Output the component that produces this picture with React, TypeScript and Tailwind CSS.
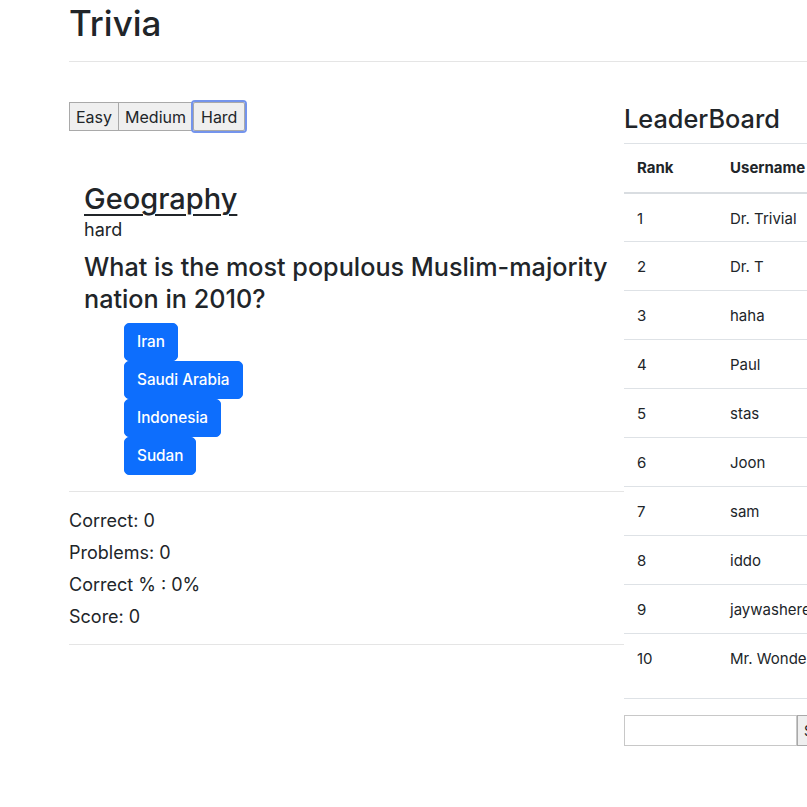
import React from 'react';

const leaders = [
  'Dr. Trivial',
  'Dr. T',
  'haha',
  'Paul',
  'stas',
  'Joon',
  'sam',
  'iddo',
  'jaywashere',
  'Mr. Wonderful',
];

const answers = ['Iran', 'Saudi Arabia', 'Indonesia', 'Sudan'];

function App() {
  return (
    <div
      className="w-[807px] min-h-[807px] overflow-hidden bg-white text-[#212529]"
      style={{ fontFamily: 'Inter, "Liberation Sans", sans-serif' }}
    >
      {/* Header */}
      <div className="ml-[69px] w-[900px] border-b border-[#e5e5e5] h-[62px]">
        <h1 className="text-[35px] leading-[46px] font-medium">Trivia</h1>
      </div>

      <div className="flex pl-[69px]">
        {/* Game column */}
        <div className="w-[555px] shrink-0">
          <div className="mt-[40px] flex">
            <button className="h-[29px] px-[6px] text-[16px] border border-[#a9a9a9] bg-[#efefef]">Easy</button>
            <button className="h-[29px] px-[6px] text-[16px] border border-l-0 border-[#a9a9a9] bg-[#efefef]">Medium</button>
            <button className="h-[29px] px-[7px] text-[16px] border border-[#a9a9a9] bg-[#efefef] outline outline-2 outline-[#7494ec] rounded-[2px]">Hard</button>
          </div>

          <div className="pl-[15px] mt-[51px]">
            <h2 className="text-[29px] leading-[34px] font-medium underline underline-offset-[5px] decoration-[2px]">Geography</h2>
            <div className="mt-[3px] text-[18px] leading-[22px]">hard</div>
            <h3 className="mt-[10px] text-[25.2px] leading-[32px] font-medium">
              What is the most populous Muslim-majority nation in 2010?
            </h3>
            <div className="mt-[8px] pl-[40px] flex flex-col items-start">
              {answers.map((a) => (
                <button
                  key={a}
                  className="h-[38px] px-[12px] text-[15.3px] font-medium text-white bg-[#0d6efd] rounded-[5px] border border-[#0d6efd]"
                >
                  {a}
                </button>
              ))}
            </div>
          </div>

          <div className="mt-[16px] border-t border-[#e5e5e5] pt-[13px] pb-[11px] border-b">
            {['Correct: 0', 'Problems: 0', 'Correct % : 0%', 'Score: 0'].map((s) => (
              <div key={s} className="text-[18px] leading-[32px]">{s}</div>
            ))}
          </div>
        </div>

        {/* LeaderBoard column */}
        <div className="w-[420px] shrink-0 mt-[41px]">
          <h2 className="text-[25.3px] leading-[32px] font-medium">LeaderBoard</h2>
          <table className="mt-[8px] w-full border-collapse text-[15px]">
            <thead>
              <tr className="border-t border-[#dee2e6] border-b-2 border-b-[#d9dde1]">
                <th className="w-[93px] text-left font-bold px-[13px] h-[49px]">Rank</th>
                <th className="text-left font-bold px-[13px]">Username</th>
              </tr>
            </thead>
            <tbody>
              {leaders.map((name, i) => (
                <tr key={name} className="border-b border-[#dee2e6]">
                  <td className={`px-[13px] align-top pt-[14px] ${i === 9 ? 'h-[65px]' : 'h-[49px]'}`}>{i + 1}</td>
                  <td className="px-[13px] align-top pt-[14px]">{name}</td>
                </tr>
              ))}
            </tbody>
          </table>
          <div className="mt-[16px] flex">
            <input className="w-[173px] h-[31px] border border-[#c8c8c8] bg-white" />
            <button className="h-[31px] px-[6px] text-[14px] border border-[#a9a9a9] bg-[#efefef]">Submit</button>
          </div>
        </div>
      </div>
    </div>
  );
}

export default App;
